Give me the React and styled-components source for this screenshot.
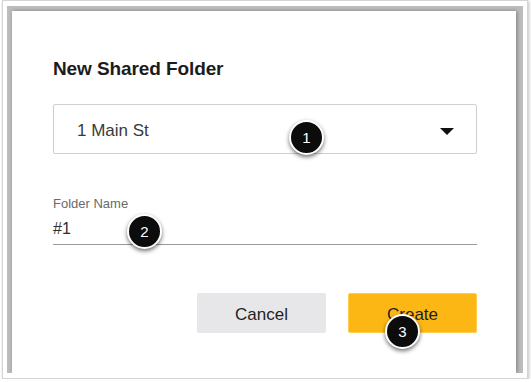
import React from "react";
import styled, { createGlobalStyle } from "styled-components";

const GlobalStyle = createGlobalStyle`
  html, body {
    margin: 0;
    padding: 0;
    background: #fff;
  }
  body {
    font-family: "Liberation Sans", Arial, sans-serif;
  }
`;

const Frame = styled.div`
  margin-left: 2px;
  width: 526px;
  height: 379px;
  box-sizing: border-box;
  border: 1px solid #d4d4d4;
  box-shadow: 1px 1px 3px rgba(0, 0, 0, 0.25);
  padding: 5px 4px 5px 4px;
  background: #fff;
`;

const Backdrop = styled.div`
  height: 100%;
  box-sizing: border-box;
  background: #bdbdbd;
  padding: 5px 7px 0 5px;
  overflow: hidden;
`;

const Dialog = styled.div`
  height: 100%;
  box-sizing: border-box;
  background: #fff;
  box-shadow: 1px 0 4px rgba(0, 0, 0, 0.35);
  padding: 47px 39px 0 41px;
  display: flex;
  flex-direction: column;
`;

const Title = styled.h2`
  margin: 0;
  font-size: 19px;
  line-height: 22px;
  font-weight: 700;
  color: #1c1c1c;
  letter-spacing: -0.1px;
`;

const Select = styled.div`
  position: relative;
  margin-top: 24px;
  height: 50px;
  box-sizing: border-box;
  border: 1px solid #cfcfcf;
  border-radius: 2px;
  display: flex;
  align-items: center;
  justify-content: space-between;
  padding: 4px 22px 0 23px;
  font-size: 17px;
  color: #3a3a3a;
`;

const Caret = styled.span`
  width: 0;
  height: 0;
  border-left: 7.5px solid transparent;
  border-right: 7.5px solid transparent;
  border-top: 7px solid #111;
`;

const Field = styled.div`
  position: relative;
  margin-top: 42px;
  border-bottom: 1px solid #9a9a9a;
  padding-bottom: 6px;
`;

const Label = styled.div`
  font-size: 13px;
  line-height: 15px;
  color: #6a6a6a;
`;

const Value = styled.div`
  margin-top: 9px;
  font-size: 16px;
  line-height: 18px;
  color: #2e2e2e;
`;

const Actions = styled.div`
  position: relative;
  display: flex;
  justify-content: flex-end;
  gap: 22px;
  margin-top: 48px;
`;

const Button = styled.div`
  width: 129px;
  height: 40px;
  box-sizing: border-box;
  display: flex;
  align-items: center;
  justify-content: center;
  padding-top: 3px;
  font-size: 17px;
  color: #1e1e1e;
  border-radius: 2px;
  background: ${(p) => (p.primary ? "#fdb715" : "#e7e7e9")};
  border: 1px solid ${(p) => (p.primary ? "#ffcc4d" : "#e7e7e9")};
`;

const Badge = styled.div`
  position: absolute;
  left: ${(p) => p.x}px;
  top: ${(p) => p.y}px;
  width: 31px;
  height: 31px;
  border-radius: 50%;
  background: #0c0c0c;
  border: 2px solid #fff;
  box-shadow: 0 2px 4px rgba(0, 0, 0, 0.55);
  color: #fff;
  font-size: 15px;
  display: flex;
  align-items: center;
  justify-content: center;
`;

const App = () => (
  <>
    <GlobalStyle />
    <Frame>
      <Backdrop>
        <Dialog>
          <Title>New Shared Folder</Title>
          <Select>
            <span>1 Main St</span>
            <Caret />
            <Badge x={235} y={15}>1</Badge>
          </Select>
          <Field>
            <Label>Folder Name</Label>
            <Value>#1</Value>
            <Badge x={74} y={18}>2</Badge>
          </Field>
          <Actions>
            <Button>Cancel</Button>
            <Button primary>Create</Button>
            <Badge x={332} y={21}>3</Badge>
          </Actions>
        </Dialog>
      </Backdrop>
    </Frame>
  </>
);

export default App;
